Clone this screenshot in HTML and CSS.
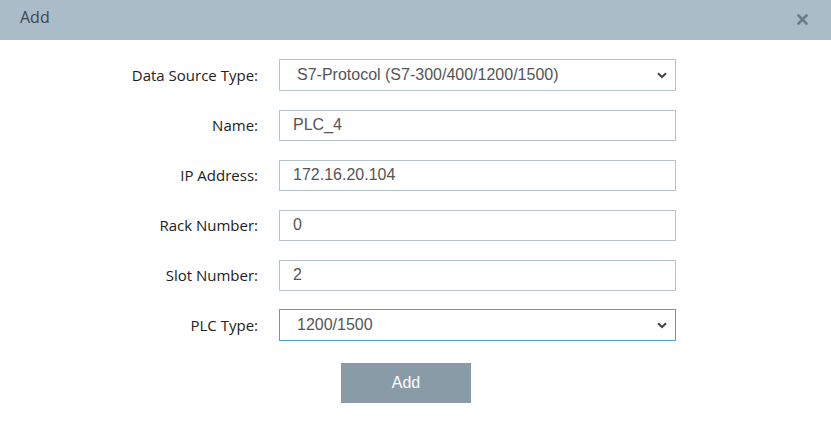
FILE: index.html
```html
<!DOCTYPE html>
<html>
<head>
<meta charset="utf-8">
<link rel="stylesheet" href="styles.css">
</head>
<body>
<div class="dialog">
  <div class="header">
    <span class="title">Add</span>
    <svg class="close" width="11" height="11" viewBox="0 0 11 11"><path d="M1.5 1.5 L9.5 9.5 M9.5 1.5 L1.5 9.5" stroke="#6b7c89" stroke-width="2.6" stroke-linecap="round"/></svg>
  </div>
  <div class="form">
    <div class="row">
      <label class="label">Data Source Type:</label>
      <div class="field select"><span>S7-Protocol (S7-300/400/1200/1500)</span>
        <svg class="chev" width="10" height="7" viewBox="0 0 10 7"><path d="M1 1.2 L5 5 L9 1.2" fill="none" stroke="#444" stroke-width="2"/></svg>
      </div>
    </div>
    <div class="row">
      <label class="label">Name:</label>
      <div class="field input">PLC_4</div>
    </div>
    <div class="row">
      <label class="label">IP Address:</label>
      <div class="field input">172.16.20.104</div>
    </div>
    <div class="row">
      <label class="label">Rack Number:</label>
      <div class="field input">0</div>
    </div>
    <div class="row">
      <label class="label">Slot Number:</label>
      <div class="field input">2</div>
    </div>
    <div class="row">
      <label class="label">PLC Type:</label>
      <div class="field select focus"><span>1200/1500</span>
        <svg class="chev" width="10" height="7" viewBox="0 0 10 7"><path d="M1 1.2 L5 5 L9 1.2" fill="none" stroke="#444" stroke-width="2"/></svg>
      </div>
    </div>
    <div class="actions">
      <button class="btn">Add</button>
    </div>
  </div>
</div>
</body>
</html>
```
FILE: styles.css
```css
html, body { margin: 0; padding: 0; background: #fff; }
body { width: 831px; height: 423px; overflow: hidden; }
.header {
  height: 40px;
  background: #abbcc9;
  display: flex;
  align-items: center;
  justify-content: space-between;
  padding: 0 23px 0 20px;
  box-sizing: border-box;
}
.title {
  font-family: "Open Sans", "Noto Sans", sans-serif;
  font-size: 16px;
  color: #3c4650;
  margin-top: -6px;
}
.close { margin-top: -2px; }
.form { padding-top: 10px; }
.row {
  height: 50px;
  display: flex;
  align-items: center;
}
.label {
  width: 258px;
  text-align: right;
  font-family: "Open Sans", "Noto Sans", sans-serif;
  font-size: 15px;
  color: #222;
  margin-right: 21px;
}
.field {
  width: 397px;
  box-sizing: border-box;
  border: 1px solid #b6c4ce;
  font-family: "Liberation Sans", Arial, sans-serif;
  font-size: 16px;
  color: #555;
  display: flex;
  align-items: center;
}
.input { height: 31px; padding-left: 13px; }
.select { height: 32px; padding-left: 17px; justify-content: space-between; padding-right: 8px; }
.select.focus { border-color: #4aa3c8; }
.chev { margin-top: 1px; }
.actions { padding: 13px 0 0 341px; }
.btn {
  width: 130px;
  height: 40px;
  border: 0;
  background: #8a9ba8;
  color: #fff;
  font-family: "Liberation Sans", Arial, sans-serif;
  font-size: 16px;
  padding: 0;
}
```
